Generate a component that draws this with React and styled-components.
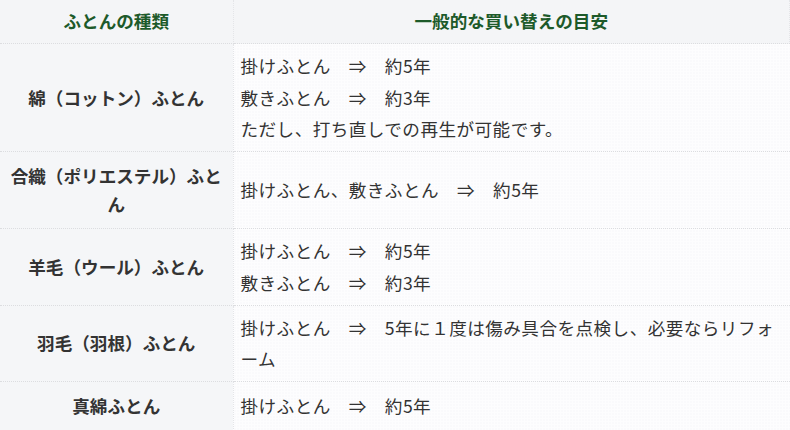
import React from 'react';
import styled, { createGlobalStyle } from 'styled-components';

const GlobalStyle = createGlobalStyle`
  body {
    margin: 0;
    background: #ffffff;
    font-family: "Noto Sans CJK JP", "Noto Sans", sans-serif;
    color: #333333;
  }
`;

const rows = [
  {
    name: '綿（コットン）ふとん',
    lines: ['掛けふとん　⇒　約5年', '敷きふとん　⇒　約3年', 'ただし、打ち直しでの再生が可能です。'],
  },
  {
    name: '合織（ポリエステル）ふとん',
    lines: ['掛けふとん、敷きふとん　⇒　約5年'],
  },
  {
    name: '羊毛（ウール）ふとん',
    lines: ['掛けふとん　⇒　約5年', '敷きふとん　⇒　約3年'],
  },
  {
    name: '羽毛（羽根）ふとん',
    lines: ['掛けふとん　⇒　5年に１度は傷み具合を点検し、必要ならリフォーム'],
  },
  {
    name: '真綿ふとん',
    lines: ['掛けふとん　⇒　約5年'],
  },
];

const App = () => {
  return (
    <>
      <GlobalStyle />
      <Table>
        <colgroup>
          <col style={{ width: 233 }} />
          <col />
        </colgroup>
        <thead>
          <tr>
            <HeadCell>ふとんの種類</HeadCell>
            <HeadCell>一般的な買い替えの目安</HeadCell>
          </tr>
        </thead>
        <tbody>
          {rows.map((row) => (
            <tr key={row.name}>
              <KindCell>{row.name}</KindCell>
              <InfoCell>
                {row.lines.map((line, i) => (
                  <Line key={i}>{line}</Line>
                ))}
              </InfoCell>
            </tr>
          ))}
        </tbody>
      </Table>
    </>
  );
};

// Styled components
const Table = styled.table`
  width: 790px;
  border-collapse: collapse;
  table-layout: fixed;
  font-size: 17.6px;
`;

const HeadCell = styled.th`
  background: #f4f5f7;
  color: #1d5a2a;
  font-weight: bold;
  text-align: center;
  line-height: 1.6;
  padding: 7px 8px 8px;
  border-bottom: 1px dotted #dcdde0;
  border-right: 1px dotted #e4e5e8;
`;

const KindCell = styled.th`
  background: #f5f6f8;
  color: #333333;
  font-weight: bold;
  text-align: center;
  vertical-align: middle;
  line-height: 1.6;
  padding: 10px 8px;
  border-bottom: 1px dotted #dcdde0;
  border-right: 1px dotted #e4e5e8;
`;

const InfoCell = styled.td`
  background-color: #fdfdfe;
  background-image: radial-gradient(#f1f2f4 0.6px, transparent 0.7px);
  background-size: 3px 3px;
  color: #333333;
  text-align: left;
  vertical-align: middle;
  line-height: 1.8;
  letter-spacing: 0.45px;
  padding: 6px 7px;
  border-bottom: 1px dotted #dcdde0;
`;

const Line = styled.div`
  line-break: normal;
`;

export default App;
